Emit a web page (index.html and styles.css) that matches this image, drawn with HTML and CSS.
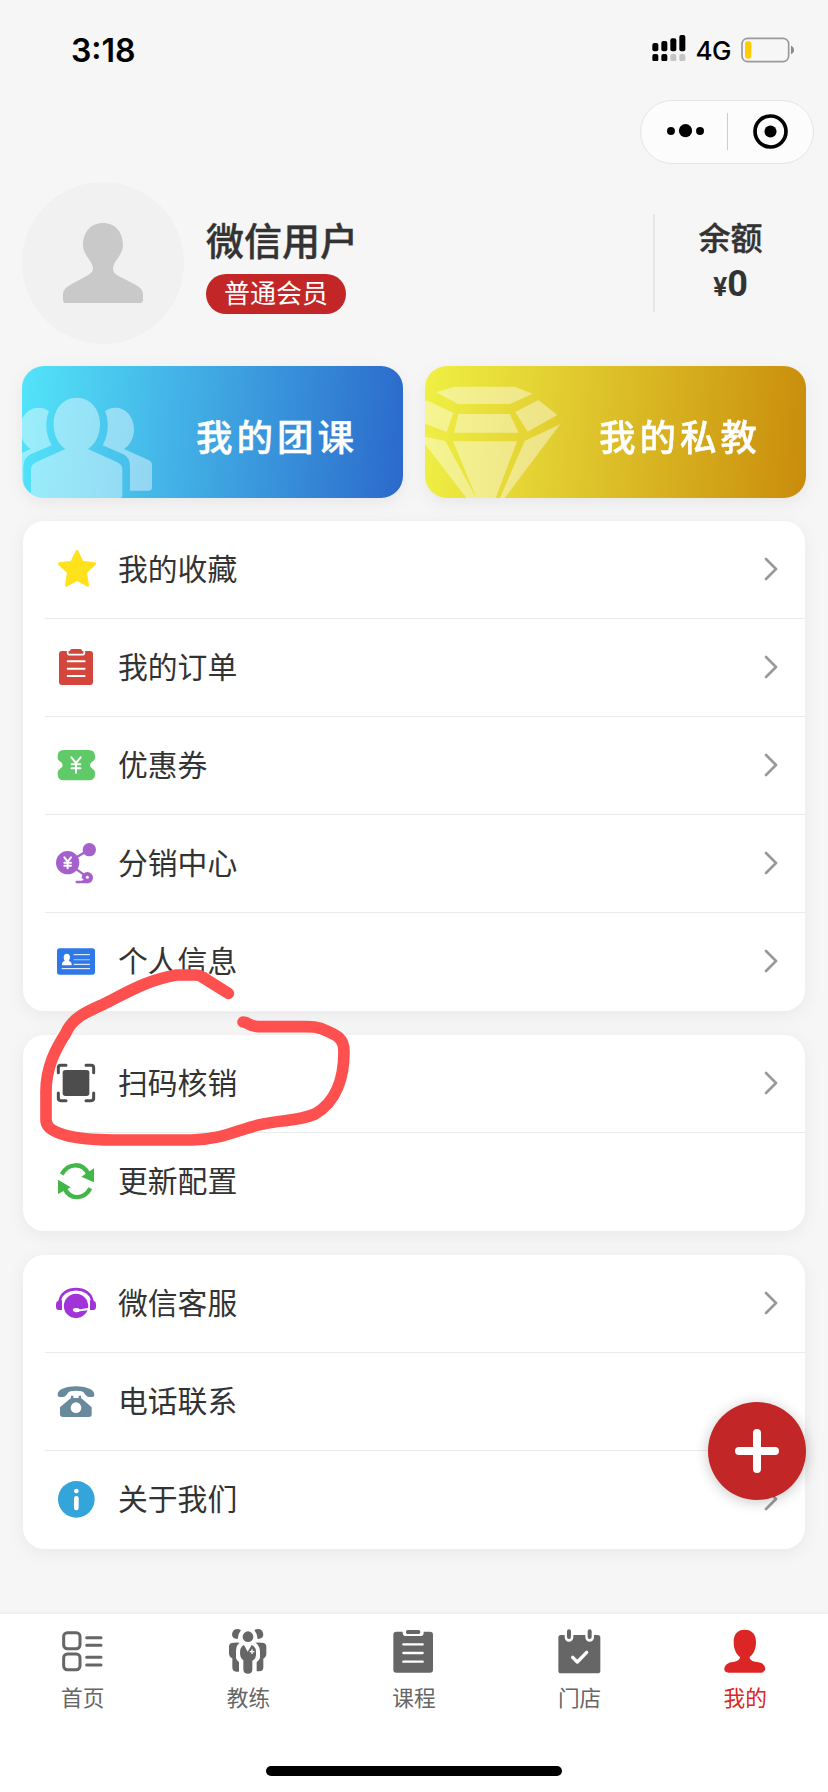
FILE: index.html
```html
<!DOCTYPE html>
<html lang="zh-CN">
<head>
<meta charset="utf-8">
<title>我的</title>
<link rel="stylesheet" href="styles.css">
</head>
<body>
<div class="screen">
  <header class="status">
    <span class="clock">3:18</span>
    <div class="status-right">
      <svg class="signal" viewBox="0 0 102 80">
        <g fill="#000"><rect x="1" y="24" width="18" height="25" rx="6"/><rect x="28" y="18" width="18" height="31" rx="6"/><rect x="55" y="10" width="18" height="39" rx="6"/><rect x="82" y="0" width="18" height="49" rx="6"/><rect x="1" y="57" width="18" height="22" rx="6"/><rect x="28" y="57" width="18" height="22" rx="6"/></g>
        <g fill="#c4c4c4"><rect x="55" y="57" width="18" height="22" rx="6"/><rect x="82" y="57" width="18" height="22" rx="6"/></g>
      </svg>
      <span class="net">4G</span>
      <svg class="battery" viewBox="0 0 162 78">
        <rect x="3" y="4" width="140" height="70" rx="17" fill="none" stroke="#999" stroke-width="5"/>
        <rect x="12" y="13" width="19" height="52" rx="8" fill="#fc0"/>
        <path d="M150 26q9 4 9 13t-9 13z" fill="#8a8a8a"/>
      </svg>
    </div>
  </header>

  <div class="capsule">
    <svg class="dots" viewBox="0 0 112 40"><circle cx="12" cy="21" r="12"/><circle cx="56" cy="20" r="20"/><circle cx="100" cy="21" r="12"/></svg>
    <i class="capsule-line"></i>
    <svg class="target" viewBox="0 0 104 104"><circle cx="52" cy="52" r="46" fill="none" stroke="#000" stroke-width="11"/><circle cx="52" cy="52" r="18"/></svg>
  </div>

  <section class="profile">
    <div class="avatar">
      <svg viewBox="0 0 240 240"><path d="M120 0C157 0 180 28 180 66C180 97 150 114 150 138Q150 150 165 158L215 184Q240 198 240 212V230Q240 240 230 240H10Q0 240 0 230V212Q0 198 25 184L72 158Q90 148 90 138C90 114 60 97 60 66C60 28 83 0 120 0Z" fill="#c9c9c9"/></svg>
    </div>
    <div class="who">
      <div class="name">微信用户</div>
      <div class="tag">普通会员</div>
    </div>
    <div class="balance">
      <div class="balance-label">余额</div>
      <div class="balance-value"><span class="yen">¥</span>0</div>
    </div>
  </section>

  <section class="entries">
    <div class="entry entry-group">
      <svg class="entry-art" viewBox="66 48 400 396" fill="#fff" fill-opacity=".42">
        <path d="M230 143C272 143 300 178 300 222C300 256 286 282 264 297L352 337Q367 345 367 358V436Q367 444 360 444H93V358Q93 345 107 337L196 297C174 282 161 256 161 222C161 178 188 143 230 143Z"/>
        <path d="M147 183C135 212 135 252 155 286L92 313Q72 322 70 350V444H40V320L92 297C72 285 60 260 60 235C60 200 85 173 116 173Q134 173 147 183Z"/>
        <path d="M315 183C327 212 327 252 308 286L370 313Q390 322 390 350V422H446Q456 422 456 412V345Q456 335 446 330L372 297C392 285 402 260 402 238C402 201 378 173 347 173Q329 173 315 183Z"/>
      </svg>
      <span class="entry-text">我的团课</span>
    </div>
    <div class="entry entry-private">
      <svg class="entry-art" viewBox="33 48 410 396" fill="#fff" fill-opacity=".42">
        <path d="M122 110H302L356 131L288 162H132L66 127Z"/>
        <path d="M28 152L42 152L118 189L98 246L25 218Z"/>
        <path d="M133 192H287L314 248H120Z"/>
        <path d="M304 186L373 150L430 195L341 245Z"/>
        <path d="M33 260L94 273L187 444H157L33 282Z"/>
        <path d="M117 274H309L245 444H187Z"/>
        <path d="M332 273L439 222L272 444H258Z"/>
      </svg>
      <span class="entry-text">我的私教</span>
    </div>
  </section>

  <main class="cards">
    <section class="card">
      <div class="row">
        <svg class="ico" viewBox="162 114 132 132"><path d="M231 124L247 156L284 161L257 187L263 226L231 209L199 226L205 187L178 161L215 156Z" fill="#ffe11c" stroke="#ffe11c" stroke-width="8" stroke-linejoin="round"/></svg>
        <span class="label">我的收藏</span><svg class="chev" viewBox="0 0 14 24"><path d="M2 2L12 12L2 22"/></svg>
      </div>
      <div class="row">
        <svg class="ico" viewBox="162 408 132 132"><rect x="177" y="423" width="102" height="102" rx="9" fill="#d4453c"/><path d="M203 421V428Q203 434 211 434H245Q253 434 253 428V421" fill="#d4453c" stroke="#fff" stroke-width="5"/><path d="M200 415H256V423H200Z" fill="#fff"/><rect x="210" y="417" width="36" height="12" rx="5" fill="#d4453c"/><path d="M203 454H254M203 476H254M203 498H254" stroke="#fff" stroke-width="6" stroke-linecap="round"/></svg>
        <span class="label">我的订单</span><svg class="chev" viewBox="0 0 14 24"><path d="M2 2L12 12L2 22"/></svg>
      </div>
      <div class="row">
        <svg class="ico" viewBox="162 702 132 132"><path d="M192 720H266Q285 720 285 738V744Q285 750 279 754Q270 759 270 766Q270 773 279 778Q285 781 285 788V792Q285 811 266 811H192Q173 811 173 792V788Q173 781 179 778Q188 773 188 766Q188 759 179 754Q173 750 173 744V738Q173 720 192 720Z" fill="#61ca68"/><path d="M214 742L228 759L242 742M228 759V788M215 763H241M215 775H241" fill="none" stroke="#fff" stroke-width="6" stroke-linecap="round"/></svg>
        <span class="label">优惠券</span><svg class="chev" viewBox="0 0 14 24"><path d="M2 2L12 12L2 22"/></svg>
      </div>
      <div class="row">
        <svg class="ico" viewBox="162 216 132 132"><g fill="#a561cb"><circle cx="203" cy="278" r="35"/><circle cx="268" cy="239" r="20"/><circle cx="262" cy="323" r="17"/></g><path d="M222 266L266 240M222 293L256 317M230 336H262" stroke="#a561cb" stroke-width="7" stroke-linecap="round"/><circle cx="262" cy="322" r="4.5" fill="#fff"/><path d="M242 328H250" stroke="#fff" stroke-width="4"/><path d="M193 262L203 275L213 262M203 275V295M193 278H213M193 287H213" fill="none" stroke="#fff" stroke-width="6" stroke-linecap="round"/></svg>
        <span class="label">分销中心</span><svg class="chev" viewBox="0 0 14 24"><path d="M2 2L12 12L2 22"/></svg>
      </div>
      <div class="row">
        <svg class="ico" viewBox="162 510 132 132"><rect x="171" y="535" width="114" height="79" rx="8" fill="#2f78e8"/><path d="M200 551C207 551 210 556 210 562Q210 568 206 572Q216 575 215 586H186Q185 575 194 572Q191 568 191 562C191 556 194 551 200 551Z" fill="#fff"/><path d="M221 554H270M221 583H270M185 596H270" stroke="#fff" stroke-width="3"/><path d="M221 569H270" stroke="#8db6f4" stroke-width="4"/></svg>
        <span class="label">个人信息</span><svg class="chev" viewBox="0 0 14 24"><path d="M2 2L12 12L2 22"/></svg>
      </div>
    </section>

    <section class="card">
      <div class="row">
        <svg class="ico" viewBox="162 306 132 132"><rect x="188" y="330" width="80" height="78" rx="8" fill="#4d4d4d"/><path d="M175 338V323Q175 316 182 316H198M258 316H274Q281 316 281 323V338M281 399V415Q281 422 274 422H258M198 422H182Q175 422 175 415V399" fill="none" stroke="#4d4d4d" stroke-width="9" stroke-linecap="round"/></svg>
        <span class="label">扫码核销</span><svg class="chev" viewBox="0 0 14 24"><path d="M2 2L12 12L2 22"/></svg>
      </div>
      <div class="row">
        <svg class="ico" viewBox="162 600 132 132"><path d="M185 643C205 607 248 607 265 642M271 685C252 720 210 721 193 684" fill="none" stroke="#42b648" stroke-width="13"/><path d="M282 625V667L244 650ZM174 659V702L212 682Z" fill="#42b648"/></svg>
        <span class="label">更新配置</span>
      </div>
    </section>

    <section class="card">
      <div class="row">
        <svg class="ico" viewBox="162 126 132 132"><circle cx="228" cy="198" r="36.500" fill="#a233d8"/><path d="M179 184C185 135 271 135 277 184" fill="none" stroke="#a233d8" stroke-width="8"/><path d="M186 180V210H178Q168 210 168 200V192Q168 184 175 182ZM270 180V210H278Q288 210 288 200V192Q288 184 281 182Z" fill="#a233d8"/><path d="M225 204Q234 203 240 208L268 203V210L240 214Q232 218 225 216Q218 213 218 210Q218 206 225 204Z" fill="#fff"/></svg>
        <span class="label">微信客服</span><svg class="chev" viewBox="0 0 14 24"><path d="M2 2L12 12L2 22"/></svg>
      </div>
      <div class="row">
        <svg class="ico" viewBox="162 420 132 132" fill="#698a9c"><path d="M173 464C171 430 285 430 283 464Q283 471 275 471H268Q261 471 256 464Q252 456 245 454Q228 450 211 454Q204 456 200 464Q195 471 188 471H181Q173 471 173 464Z"/><path d="M213 467H220V474H236V467H243V475L247 477L275 502V523Q275 531 267 531H189Q180 531 180 523V502L209 477L213 475Z"/><circle cx="228" cy="503" r="16" fill="#fff"/></svg>
        <span class="label">电话联系</span>
      </div>
      <div class="row">
        <svg class="ico" viewBox="162 714 132 132"><circle cx="229" cy="778" r="55" fill="#33a5da"/><circle cx="229" cy="753" r="7" fill="#fff"/><path d="M229 775V804" stroke="#fff" stroke-width="14" stroke-linecap="round"/></svg>
        <span class="label">关于我们</span><svg class="chev" viewBox="0 0 14 24"><path d="M2 2L12 12L2 22"/></svg>
      </div>
    </section>
  </main>

  <nav class="tabs">
    <div class="tab">
      <svg viewBox="176 114 144 144" fill="none" stroke="#666"><rect x="190" y="128" width="49" height="48" rx="11" stroke-width="9"/><rect x="190" y="192" width="49" height="47" rx="11" stroke-width="9"/><path d="M259 143H302M259 166H302M259 202H302M259 225H302" stroke-width="9" stroke-linecap="round"/></svg>
      <span>首页</span>
    </div>
    <div class="tab">
      <svg viewBox="673 114 144 144" fill="#666"><circle cx="745" cy="140" r="16"/><path d="M724 120Q712 114 703 120Q695 127 698 139Q702 147 714 147Q715 131 724 120ZM764 120Q776 114 785 120Q793 127 790 139Q786 147 774 147Q773 131 764 120Z"/><path d="M696 159Q704 157 720 158L714 164Q708 171 709 188V204Q711 212 718 217V245H710Q698 245 698 232V205Q687 200 688 188V170Q688 161 696 159ZM793 159Q785 157 768 158L774 164Q781 171 781 188V204Q778 212 771 217V244H779Q791 244 791 232V206Q801 200 800 188V170Q800 161 793 159Z"/><path d="M733 165L744 185L756 165Q768 170 769 184V196Q768 208 758 212V239Q757 251 745 251Q732 251 731 239V211Q722 205 721 190Q720 170 733 165Z"/><path d="M757 178V192M750 185H764" stroke="#fff" stroke-width="4"/></svg>
      <span>教练</span>
    </div>
    <div class="tab">
      <svg viewBox="-72 114 144 144"><rect x="-62" y="125" width="119" height="123" rx="9" fill="#666"/><path d="M-34 120V128Q-34 138 -24 138H19Q29 138 29 128V120Z" fill="#fff"/><rect x="-24" y="120" width="43" height="12" rx="5" fill="#666"/><path d="M-32 163H26M-32 189H26M-32 215H26" stroke="#fff" stroke-width="7" stroke-linecap="round"/></svg>
      <span>课程</span>
    </div>
    <div class="tab">
      <svg viewBox="425 114 144 144"><rect x="432" y="135" width="126" height="115" rx="8" fill="#666"/><path d="M464 125V142M526 125V142" stroke="#fff" stroke-width="26" stroke-linecap="round"/><path d="M464 124V141M526 124V141" stroke="#666" stroke-width="12" stroke-linecap="round"/><path d="M475 202L489 216L517 187" fill="none" stroke="#fff" stroke-width="10" stroke-linecap="round" stroke-linejoin="round"/></svg>
      <span>门店</span>
    </div>
    <div class="tab active">
      <svg viewBox="922 114 144 144"><path d="M993 119C1015 119 1027 133 1027 156C1027 180 1018 193 1008 201C1007 212 1022 216 1035 217C1048 219 1055 228 1055 238Q1053 248 1041 248H945Q933 248 932 238C932 228 940 219 953 217C966 216 980 211 979 201C969 193 960 180 960 156C960 133 971 119 993 119Z" fill="#dc2626"/></svg>
      <span>我的</span>
    </div>
  </nav>

  <div class="fab"><svg viewBox="0 0 132 132"><path d="M66 12V120M12 66H120" stroke="#fff" stroke-width="24" stroke-linecap="round"/></svg></div>
  <svg class="scribble" viewBox="0 0 1200 600"><path d="M685 100L607 51Q598 45 585 45H530C440 60 380 98 310 133C265 153 217 172 197 220C168 265 138 320 138 395V480C138 522 220 539 340 540H575C670 538 710 510 780 494C850 478 890 485 945 462C1010 425 1032 350 1032 275C1032 232 1008 224 962 205Q945 200 920 200H775Q756 199 744 191Q738 186 729 186"/></svg>
  <i class="home-bar"></i>
</div>
</body>
</html>
```
FILE: styles.css
```css
* { box-sizing: border-box; }
body { margin: 0; background: #f6f6f6; color: #333; font-family: "Noto Sans CJK SC", sans-serif; }
svg { display: block; flex: none; }
.screen { position: relative; width: 828px; height: 1792px; overflow: hidden; display: flex; flex-direction: column; }

.status { height: 100px; padding: 0 33px 0 71px; display: flex; justify-content: space-between; align-items: center; color: #000; font-family: Inter, sans-serif; }
.clock { font-size: 32px; font-weight: 600; }
.status-right { display: flex; align-items: center; gap: 10px; }
.signal { width: 34px; height: 26.7px; margin-top: -4px; }
.net { font-size: 26px; font-weight: 500; letter-spacing: -.5px; }
.battery { width: 54px; height: 26px; }

.capsule { align-self: flex-end; width: 174px; height: 64px; margin-right: 14px; padding: 0 25px 2px 26px; border: 1px solid #e5e5e5; border-radius: 32px; background: #fcfcfc; display: flex; align-items: center; }
.dots { width: 37px; height: 13.3px; }
.capsule-line { width: 1px; height: 37px; margin: 0 25px 0 23px; background: #ccc; }
.target { width: 35px; height: 35px; }

.profile { height: 202px; padding: 18px 22px 22px; display: flex; align-items: center; }
.avatar { width: 162px; height: 162px; border-radius: 50%; background: #f1f1f1; display: flex; justify-content: center; align-items: center; }
.avatar svg { width: 80px; height: 80px; }
.who { margin-left: 22px; flex: 1; padding-top: 6px; }
.name { height: 56px; line-height: 41px; font-size: 38px; font-weight: 500; -webkit-text-stroke: .4px #333; }
.tag { width: 140px; height: 40px; border-radius: 20px; background: #c22626; color: #fff; font-size: 26px; line-height: 36px; text-align: center; }
.balance { width: 153px; height: 98px; border-left: 2px solid #e6e6e6; text-align: center; font-weight: 500; }
.balance-label { height: 46px; font-size: 32px; line-height: 45px; -webkit-text-stroke: .4px #333; }
.balance-value { font: 700 36px/48px Roboto, sans-serif; }
.yen { font-size: 26px; }

.entries { padding: 0 22px; display: flex; gap: 22px; filter: drop-shadow(0 5px 8px rgba(0, 0, 0, .06)); }
.entry { flex: 1; height: 132px; border-radius: 22px; overflow: hidden; display: flex; align-items: center; justify-content: space-between; padding-right: 45px; color: #fff; font-size: 36.500px; font-weight: 500; letter-spacing: 4px; line-height: 50px; }
.entry-text { padding-top: 7px; -webkit-text-stroke: .4px #fff; }
.entry-group { background: linear-gradient(95deg, #53e4f9, #2b69cb); }
.entry-private { background: linear-gradient(95deg, #eff044, #c98c0b); }
.entry-art { height: 132px; }

.cards { flex: 1; padding: 23px 23px 0; display: flex; flex-direction: column; gap: 24px; }
.card { border-radius: 21px; background: #fff; padding-left: 22px; box-shadow: 0 4px 18px rgba(0, 0, 0, .06); }
.row { height: 98px; padding: 0 27px 0 9px; display: flex; align-items: center; border-bottom: 1px solid #ebebeb; }
.row:last-child { border-bottom-color: transparent; }
.ico { width: 44px; height: 44px; }
.label { flex: 1; margin-left: 20px; padding-bottom: 6px; font-size: 29.800px; line-height: 44px; }
.chev { width: 14px; height: 24px; margin-bottom: 2px; fill: none; stroke: #999; stroke-width: 2.700; stroke-linecap: round; stroke-linejoin: round; }

.tabs { height: 178px; padding-top: 14px; background: #fff; box-shadow: 0 -1px 3px rgba(0, 0, 0, .05); display: flex; color: #666; font-size: 21.700px; line-height: 32px; }
.tab { flex: 1; display: flex; flex-direction: column; align-items: center; gap: 5px; }
.tab svg { width: 48px; height: 48px; }
.active { color: #dc2626; }

.fab { position: absolute; left: 708px; top: 1402px; width: 98px; height: 98px; border-radius: 50%; background: #c22626; box-shadow: 0 2px 14px rgba(0, 0, 0, .22); display: flex; align-items: center; justify-content: center; }
.fab svg { width: 44px; height: 44px; }
.scribble { position: absolute; left: 0; top: 960px; width: 400px; height: 200px; fill: none; stroke: #ff5050; stroke-width: 35; stroke-linecap: round; stroke-linejoin: round; }
.home-bar { position: absolute; left: 266px; top: 1766px; width: 296px; height: 10px; border-radius: 5px; background: #000; }
```
